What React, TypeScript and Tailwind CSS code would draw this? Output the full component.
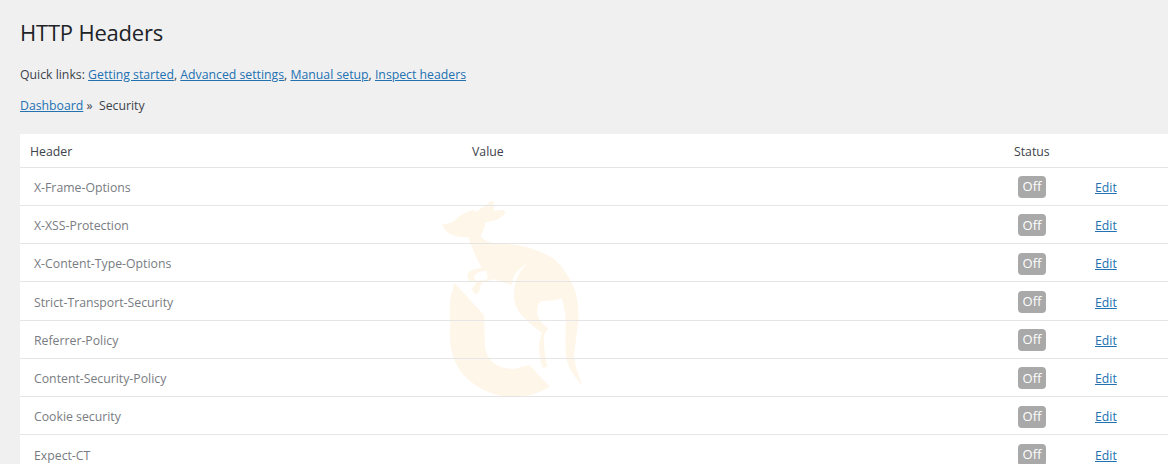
const rows = [
  'X-Frame-Options',
  'X-XSS-Protection',
  'X-Content-Type-Options',
  'Strict-Transport-Security',
  'Referrer-Policy',
  'Content-Security-Policy',
  'Cookie security',
  'Expect-CT',
]

const Watermark = () => (
  <svg
    className="absolute left-[400px] top-[56px] w-[190px] h-[210px]"
    viewBox="0 0 570 630"
    fill="#fff6ea"
  >
    <path
      fillRule="evenodd"
      d="M68 103 Q95 102 108 88 Q120 72 145 65 L150 60 L155 64 L160 60 L168 65 Q190 52 210 35 L220 32 L222 62 L250 60 L257 68 Q245 88 200 97 L195 97 Q195 120 183 135 Q183 150 215 158 L290 165 Q350 175 400 205 Q440 240 465 300 Q478 350 475 390 L462 500 Q470 550 490 590 Q450 550 440 510 Q435 480 437 420 Q438 360 425 325 Q400 333 365 333 Q350 340 352 370 Q355 395 384 415 L372 435 Q370 480 382 530 L368 533 Q355 500 357 460 L365 428 Q325 400 300 370 Q280 340 282 315 Q280 262 320 222 Q290 240 280 262 L275 285 L222 268 L185 278 L175 310 L165 312 L155 298 L170 275 L150 275 Q140 265 143 250 Q150 238 185 233 Q165 200 145 142 Q100 142 80 125 Q68 113 68 103 Z M200 243 Q175 243 165 255 Q160 268 170 272 L203 268 Z"
    />
    <path d="M103 278 L192 375 L195 470 Q205 535 280 537 L328 525 L390 590 Q340 622 270 622 Q190 615 130 555 Q90 505 90 440 L90 330 Z" />
  </svg>
)

export default function App() {
  return (
    <div className="min-h-screen bg-[#f0f0f1] pl-5 pt-[17px] overflow-hidden font-['Open_Sans','Noto_Sans',sans-serif] text-[12.28px] text-[#3c434a]">
      <h1 className="text-[22px] tracking-[-0.2px] leading-[30px] font-normal text-[#1d2327] mb-[18px]">HTTP Headers</h1>
      <p className="leading-[20px] mb-[11px]">
        Quick links: <a href="#" className="text-[#2271b1] underline">Getting started</a>,{' '}
        <a href="#" className="text-[#2271b1] underline">Advanced settings</a>,{' '}
        <a href="#" className="text-[#2271b1] underline">Manual setup</a>,{' '}
        <a href="#" className="text-[#2271b1] underline">Inspect headers</a>
      </p>
      <p className="leading-[20px] mb-[18px]">
        <a href="#" className="text-[#2271b1] underline">Dashboard</a> »&nbsp; Security
      </p>
      <div className="relative bg-white">
        <Watermark />
        <table className="relative w-full table-fixed border-collapse">
          <thead>
            <tr className="h-[33px] border-b border-[#e5e5e5]">
              <th className="w-[442px] pl-[10px] pt-[3px] text-left font-normal">Header</th>
              <th className="w-[542px] pl-[10px] pt-[3px] text-left font-normal">Value</th>
              <th className="w-[81px] pl-[10px] pt-[3px] text-left font-normal">Status</th>
              <th></th>
            </tr>
          </thead>
          <tbody>
            {rows.map((r) => (
              <tr key={r} className="h-[38.25px] border-b border-[#e5e5e5]">
                <td className="pl-[14px] pt-[4px] text-[#787c82]">{r}</td>
                <td></td>
                <td className="pl-[14px] pt-[2px]">
                  <span className="flex w-[28px] h-[22px] items-center justify-center rounded bg-[#a9a9a9] text-[13px] text-white">Off</span>
                </td>
                <td className="pl-[10px] pt-[4px]">
                  <a href="#" className="text-[#2271b1] underline">Edit</a>
                </td>
              </tr>
            ))}
          </tbody>
        </table>
      </div>
    </div>
  )
}
